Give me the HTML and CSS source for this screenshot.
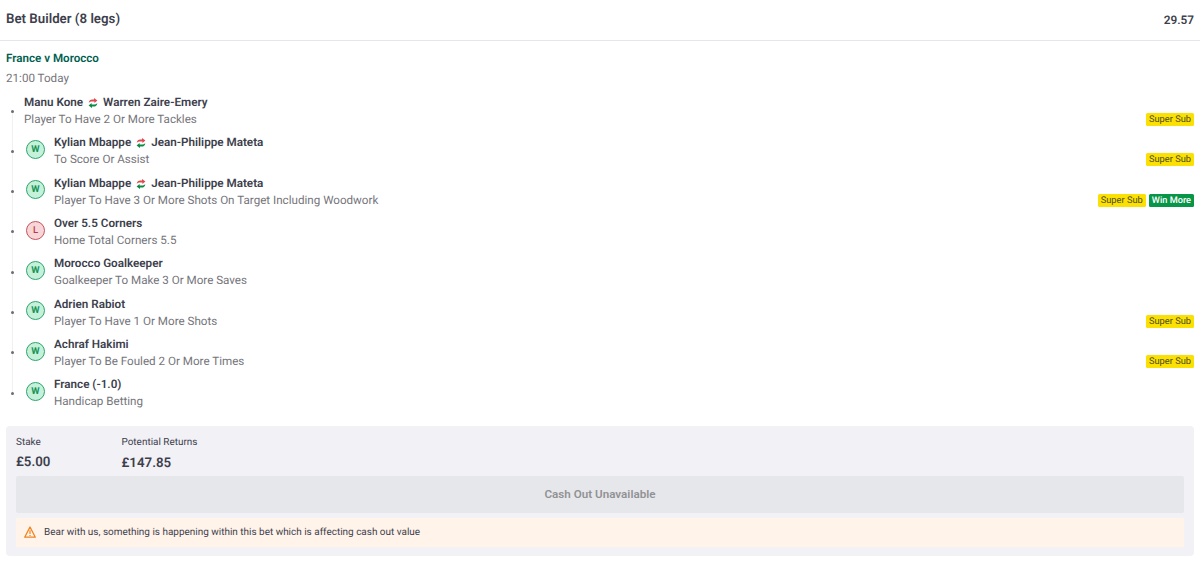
FILE: index.html
```html
<!DOCTYPE html>
<html lang="en">
<head>
<meta charset="utf-8">
<title>Bet Builder</title>
<link rel="stylesheet" href="styles.css">
</head>
<body>
<svg class="defs" width="0" height="0" aria-hidden="true">
  <symbol id="swap" viewBox="0 0 10 10">
    <path d="M.7 4.800C1 2.500 2.400 1.400 4.200 1.400H6V.1L9.400 2.500 6.400 5V3.600H4.200C2.700 3.600 1.800 3.900.7 4.800Z" fill="#dd4a50"/>
    <path d="M9.300 5.200C9 7.500 7.600 8.600 5.800 8.600H4V9.900L.6 7.500 3.600 5V6.400H5.800C7.300 6.400 8.200 6.100 9.300 5.200Z" fill="#0b8a43"/>
  </symbol>
</svg>
<header class="header"><span class="header-title">Bet Builder (8 legs)</span><span class="odds">29.57</span></header>
<main>
  <div class="event">France v Morocco</div>
  <div class="time">21:00 Today</div>
  <ul class="legs">
    <li class="leg"><i class="dot"></i><div class="info"><div class="name">Manu Kone<svg class="swap"><use href="#swap"/></svg>Warren Zaire-Emery</div><div class="market">Player To Have 2 Or More Tackles</div></div><div class="tags"><span class="tag">Super Sub</span></div></li>
    <li class="leg"><i class="dot"></i><span class="result">W</span><div class="info"><div class="name">Kylian Mbappe<svg class="swap"><use href="#swap"/></svg>Jean-Philippe Mateta</div><div class="market">To Score Or Assist</div></div><div class="tags"><span class="tag">Super Sub</span></div></li>
    <li class="leg"><i class="dot"></i><span class="result">W</span><div class="info"><div class="name">Kylian Mbappe<svg class="swap"><use href="#swap"/></svg>Jean-Philippe Mateta</div><div class="market">Player To Have 3 Or More Shots On Target Including Woodwork</div></div><div class="tags"><span class="tag">Super Sub</span><span class="tag more">Win More</span></div></li>
    <li class="leg"><i class="dot"></i><span class="result lost">L</span><div class="info"><div class="name">Over 5.5 Corners</div><div class="market">Home Total Corners 5.5</div></div></li>
    <li class="leg"><i class="dot"></i><span class="result">W</span><div class="info"><div class="name">Morocco Goalkeeper</div><div class="market">Goalkeeper To Make 3 Or More Saves</div></div></li>
    <li class="leg"><i class="dot"></i><span class="result">W</span><div class="info"><div class="name">Adrien Rabiot</div><div class="market">Player To Have 1 Or More Shots</div></div><div class="tags"><span class="tag">Super Sub</span></div></li>
    <li class="leg"><i class="dot"></i><span class="result">W</span><div class="info"><div class="name">Achraf Hakimi</div><div class="market">Player To Be Fouled 2 Or More Times</div></div><div class="tags"><span class="tag">Super Sub</span></div></li>
    <li class="leg"><i class="dot"></i><span class="result">W</span><div class="info"><div class="name">France (-1.0)</div><div class="market">Handicap Betting</div></div></li>
  </ul>
</main>
<section class="summary">
  <div class="amounts">
    <div class="amount"><div class="label">Stake</div><div class="value">£5.00</div></div>
    <div class="amount"><div class="label">Potential Returns</div><div class="value returns">£147.85</div></div>
  </div>
  <button class="cashout" disabled>Cash Out Unavailable</button>
  <div class="notice"><svg class="warning" viewBox="0 0 12 12"><path d="M6 1 11.300 11.200H.7Z" fill="none" stroke="#ee8420" stroke-width="1.300" stroke-linejoin="round"/><path d="M6 4.300V8M6 8.900V10" stroke="#ee8420" stroke-width="1.200"/></svg><span>Bear with us, something is happening within this bet which is affecting cash out value</span></div>
</section>
</body>
</html>
```
FILE: styles.css
```css
* { box-sizing: border-box; }
body { margin: 0; background: #fff; color: #3e3f4d; font-family: Roboto, sans-serif; font-size: 11.630px; text-rendering: geometricPrecision; }
.defs { display: block; }
.header { height: 41px; padding: 0 6px 1px; border-bottom: 1px solid #e6e6ea; display: flex; justify-content: space-between; align-items: center; font-weight: 600; }
.header-title { font-size: 13.300px; }
.odds { font-size: 11.800px; }
main { padding: 9px 6px 0; }
.event { color: #00604f; font-weight: 600; line-height: 17px; }
.time { color: #75757b; line-height: 17px; margin-top: 3px; }
.legs { list-style: none; margin: 7px 0 0; padding: 0; }
.leg { position: relative; height: 40.33px; display: flex; padding-left: 18px; }
.leg:not(:last-child)::before { content: ""; position: absolute; left: 5.500px; top: 17px; height: 40px; width: 1px; background: #f0f0f2; }
.dot { position: absolute; left: 4.500px; top: 15.500px; width: 3px; height: 3px; border-radius: 50%; background: #6b6c75; }
.result { flex: none; width: 19px; height: 19px; margin: 5.700px 9px 0 2px; border: 1px solid #2ba66b; border-radius: 50%; background: #c5f0da; color: #159455; display: flex; align-items: center; justify-content: center; font-size: 9.500px; font-weight: 700; }
.lost { border-color: #c2545c; background: #f8d5d7; color: #b83c45; font-weight: 500; }
.info { flex: 1; }
.name { font-weight: 600; font-size: 11.680px; line-height: 17px; white-space: nowrap; display: flex; align-items: center; }
.swap { width: 10px; height: 10px; margin: 1px 5px 0; }
.market { color: #75757b; line-height: 16px; }
.tags { display: flex; gap: 3px; margin-top: 19px; height: 13px; }
.tag { background: #fbe103; color: #4e4a20; border-radius: 1.500px; padding: 0 3px; font-size: 9.300px; line-height: 13px; }
.more { background: #079547; color: #fff; font-weight: 500; font-size: 9.200px; }
.summary { margin: 9px 6px 0; padding: 9px 10px 10px; height: 130px; background: #f1f1f6; border-radius: 4px; }
.amounts { display: flex; height: 41px; }
.amount { width: 105.500px; }
.label { font-size: 9.950px; line-height: 16px; }
.value { font-size: 13.300px; font-weight: 600; line-height: 17px; margin-top: 3px; }
.returns { margin-top: 4px; }
.cashout { display: block; width: 100%; height: 37px; border: 0; padding: 0; border-radius: 2px; background: #e6e7eb; color: #929294; font: 600 11.650px Roboto, sans-serif; }
.notice { display: flex; align-items: center; height: 29px; margin-top: 5px; padding-left: 7.500px; background: #fff3ea; font-size: 9.960px; }
.warning { width: 12px; height: 12px; margin-right: 8.500px; }
```
